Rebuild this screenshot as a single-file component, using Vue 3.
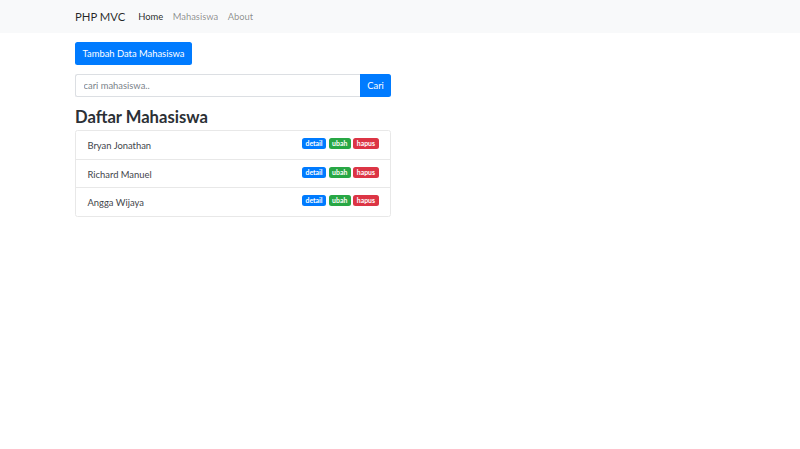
<template>
  <div class="page">
    <nav class="navbar">
      <a class="brand">PHP MVC</a>
      <a class="nav-link active">Home</a>
      <a class="nav-link">Mahasiswa</a>
      <a class="nav-link">About</a>
    </nav>

    <div class="container">
      <button class="btn-tambah">Tambah Data Mahasiswa</button>

      <div class="search">
        <input class="search-input" type="text" placeholder="cari mahasiswa.." />
        <button class="search-btn">Cari</button>
      </div>

      <h3 class="title">Daftar Mahasiswa</h3>

      <ul class="list">
        <li v-for="m in mahasiswa" :key="m" class="item">
          <span class="name">{{ m }}</span>
          <span class="badges">
            <a class="badge blue">detail</a>
            <a class="badge green">ubah</a>
            <a class="badge red">hapus</a>
          </span>
        </li>
      </ul>
    </div>
  </div>
</template>

<script setup>
const mahasiswa = ['Bryan Jonathan', 'Richard Manuel', 'Angga Wijaya']
</script>

<style>
html, body {
  margin: 0;
  background: #fff;
}
</style>

<style scoped>
.page {
  height: 449px;
  overflow: hidden;
  font-family: Lato, "Noto Sans", sans-serif;
  font-size: 9.4px;
  color: #212529;
}
.navbar {
  display: flex;
  align-items: center;
  height: 33px;
  padding-left: 75px;
  background: #f8f9fa;
}
.brand {
  font-size: 11.3px;
  color: rgba(0, 0, 0, 0.85);
  margin-right: 13px;
}
.nav-link {
  color: rgba(0, 0, 0, 0.45);
  margin-right: 9.5px;
}
.nav-link.active {
  color: rgba(0, 0, 0, 0.85);
}
.container {
  width: 316px;
  margin-left: 75px;
  padding-top: 9px;
}
.btn-tambah {
  display: block;
  width: 117px;
  height: 23px;
  padding: 0;
  border: none;
  border-radius: 2.5px;
  background: #007bff;
  color: #fff;
  font: inherit;
}
.search {
  display: flex;
  margin-top: 9px;
  height: 23px;
}
.search-input {
  flex: 1;
  min-width: 0;
  box-sizing: border-box;
  height: 23px;
  padding: 0 7.5px;
  border: 1px solid #dcdfe3;
  border-right: none;
  border-radius: 2.5px 0 0 2.5px;
  font: inherit;
  outline: none;
}
.search-input::placeholder {
  color: #7b838a;
  opacity: 1;
}
.search-btn {
  width: 31px;
  padding: 0;
  border: none;
  border-radius: 0 2.5px 2.5px 0;
  background: #007bff;
  color: #fff;
  font: inherit;
}
.title {
  margin: 9px 0 2px;
  font-size: 16.6px;
  font-weight: 700;
  line-height: 22px;
  color: #2b3035;
}
.list {
  list-style: none;
  margin: 0;
  padding: 0;
  border: 1px solid #e8e8e8;
  border-radius: 2.5px;
}
.item {
  display: flex;
  align-items: center;
  justify-content: space-between;
  height: 27.7px;
  padding: 1px 11.5px 0;
  box-sizing: content-box;
  height: 26.7px;
  border-top: 1px solid #e8e8e8;
}
.item:first-child {
  border-top: none;
}
.name {
  color: #3f454b;
}
.badges {
  display: flex;
  gap: 2.5px;
  margin-top: -4px;
}
.badge {
  padding: 0 3.5px;
  height: 11px;
  line-height: 10.5px;
  border-radius: 2.5px;
  font-size: 6.9px;
  font-weight: 700;
  color: #fff;
}
.blue {
  background: #007bff;
}
.green {
  background: #28a745;
}
.red {
  background: #dc3545;
}
</style>
